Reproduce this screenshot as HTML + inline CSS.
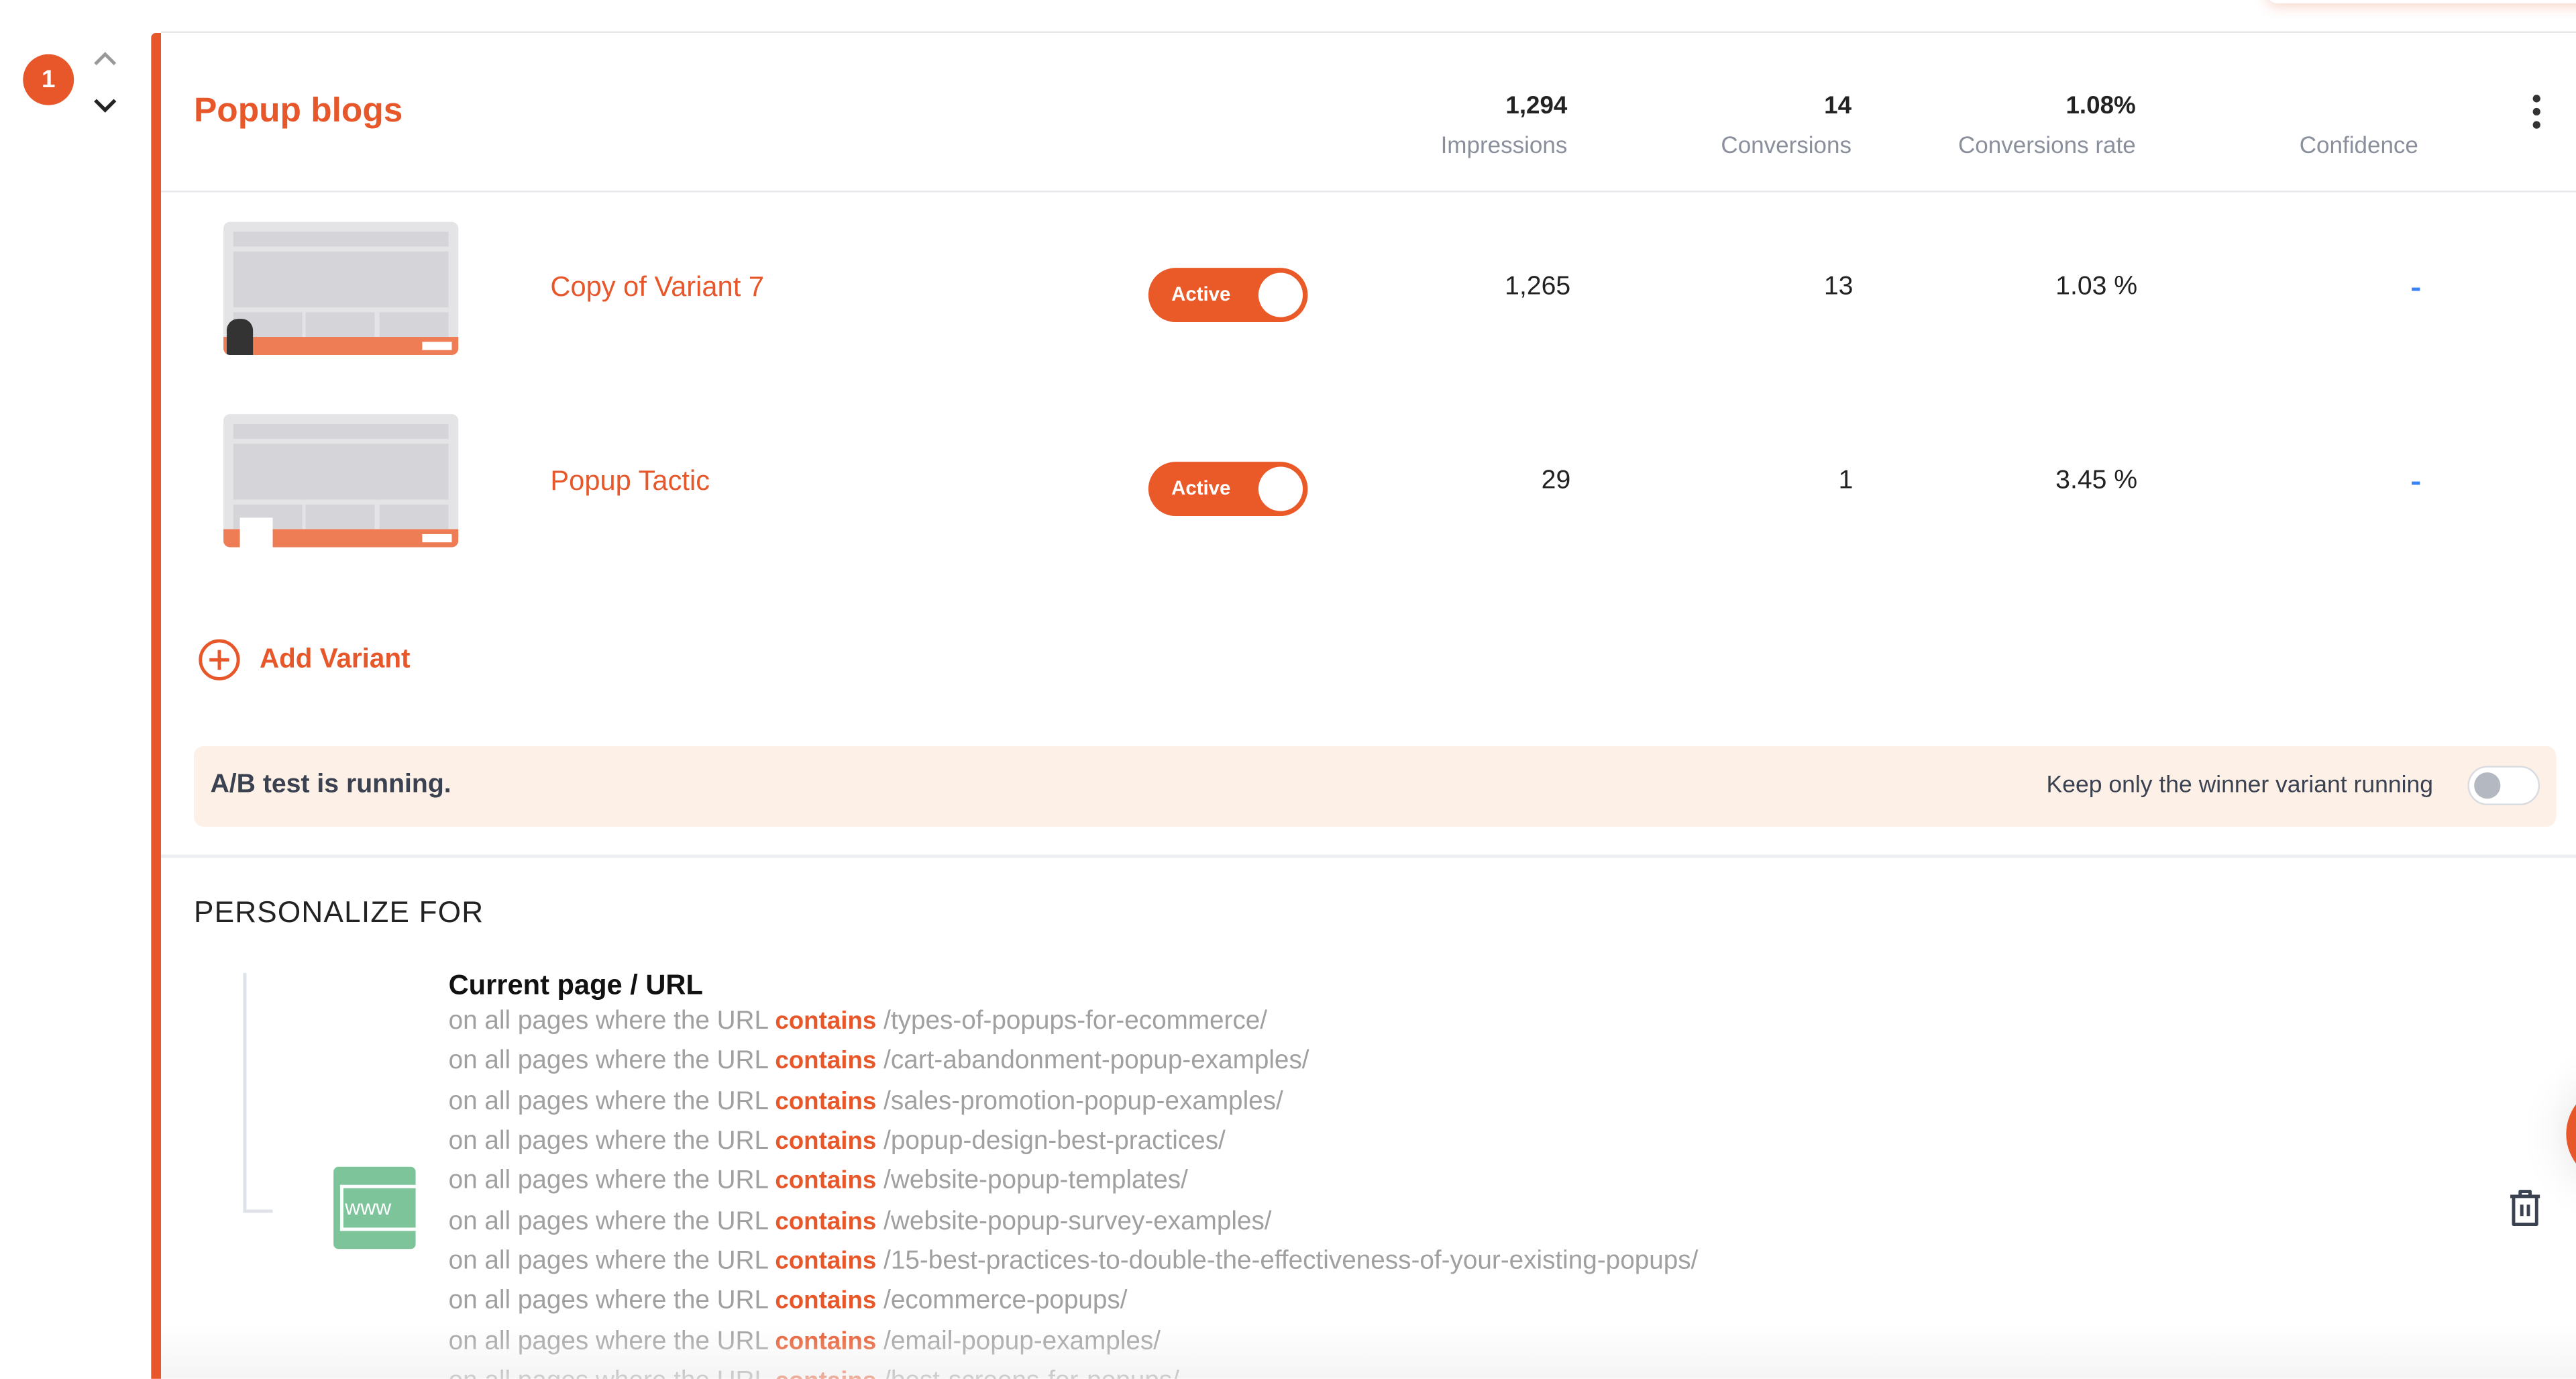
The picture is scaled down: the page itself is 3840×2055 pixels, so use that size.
<!DOCTYPE html>
<html><head><meta charset="utf-8"><style>
*{margin:0;padding:0;box-sizing:border-box}
html,body{width:3840px;height:2055px;overflow:hidden;background:#fff}
#w{position:absolute;left:0;top:0;width:1568px;height:839px;transform:scale(2.449);transform-origin:0 0;font-family:"Liberation Sans",Arial,sans-serif;overflow:hidden}
.a{position:absolute;white-space:nowrap}
.or{color:#e8572a}
.num{font-size:15px;font-weight:bold;color:#222;text-align:right}
.lbl{font-size:14.3px;color:#8a8f9c;text-align:right}
.tog{position:absolute;width:97px;height:33px;border-radius:17px;background:#ea5a28;}
.tog span{position:absolute;left:14px;top:9px;color:#fff;font-size:12px;font-weight:bold}
.tog i{position:absolute;right:3px;top:3px;width:27px;height:27px;border-radius:50%;background:#fff}
.th{position:absolute;width:143px;height:81px;background:#e4e4e7;border-radius:4px;overflow:hidden}
.th b{position:absolute;background:#d5d5d9}
.th .s{position:absolute;left:0;bottom:0;width:100%;height:11px;background:#ee7d55}
.url{position:absolute;left:273px;font-size:15.8px;color:#a0a0a0;white-space:nowrap}
.url em{font-style:normal;font-weight:bold;color:#e8572a;font-size:15px}
</style></head><body><div id="w">
<div class="a" style="left:1380px;top:-10px;width:200px;height:12px;border-radius:6px;box-shadow:0 2px 8px rgba(232,87,42,.25)"></div>
<div class="a" style="left:14px;top:33px;width:31px;height:31px;border-radius:50%;background:#e8572a;color:#fff;font-size:15px;font-weight:bold;text-align:center;line-height:31px">1</div>
<svg class="a" style="left:56px;top:28px" width="16" height="44"><path d="M2 11 L8 5 L14 11" stroke="#999" stroke-width="2" fill="none"/><path d="M2 33 L8 39 L14 33" stroke="#222" stroke-width="2.2" fill="none"/></svg>
<div class="a" style="left:92px;top:20px;width:6px;height:820px;background:#e8572a;border-radius:3px 0 0 0"></div>
<div class="a" style="left:98px;top:19px;width:1470px;height:1px;background:#e6e8ec"></div>
<div class="a or" style="left:118px;top:56px;font-size:21px;font-weight:bold">Popup blogs</div>
<div class="a num" style="right:614px;top:56px">1,294</div><div class="a lbl" style="right:614px;top:81px">Impressions</div>
<div class="a num" style="right:441px;top:56px">14</div><div class="a lbl" style="right:441px;top:81px">Conversions</div>
<div class="a num" style="right:268px;top:56px">1.08%</div><div class="a lbl" style="right:268px;top:81px">Conversions rate</div>
<div class="a lbl" style="right:96px;top:81px">Confidence</div>
<svg class="a" style="left:1539px;top:56px" width="10" height="26"><circle cx="5" cy="4" r="2.3" fill="#333"/><circle cx="5" cy="12" r="2.3" fill="#333"/><circle cx="5" cy="20" r="2.3" fill="#333"/></svg>
<div class="a" style="left:98px;top:116px;width:1470px;height:1px;background:#e6e8ec"></div>

<div class="th" style="left:136px;top:135px"><b style="left:6px;top:6px;width:131px;height:9px"></b><b style="left:6px;top:18px;width:131px;height:34px"></b><b style="left:6px;top:55px;width:42px;height:18px"></b><b style="left:50px;top:55px;width:42px;height:18px"></b><b style="left:95px;top:55px;width:42px;height:18px"></b><div class="s"></div><div style="position:absolute;left:2px;bottom:0;width:16px;height:22px;background:#333;border-radius:7px 7px 0 0"></div><div style="position:absolute;right:4px;bottom:3px;width:18px;height:5px;background:#fff"></div></div>
<div class="a or" style="left:335px;top:165px;font-size:17px">Copy of Variant 7</div>
<div class="tog" style="left:699px;top:163px"><span>Active</span><i></i></div>
<div class="a num" style="right:612px;top:166px;font-size:16px;font-weight:normal">1,265</div>
<div class="a num" style="right:440px;top:166px;font-size:16px;font-weight:normal">13</div>
<div class="a num" style="right:267px;top:166px;font-size:16px;font-weight:normal">1.03 %</div>
<div class="a" style="left:1468px;top:175px;width:5px;height:2px;background:#3b82f6"></div>

<div class="th" style="left:136px;top:252px"><b style="left:6px;top:6px;width:131px;height:9px"></b><b style="left:6px;top:18px;width:131px;height:34px"></b><b style="left:6px;top:55px;width:42px;height:18px"></b><b style="left:50px;top:55px;width:42px;height:18px"></b><b style="left:95px;top:55px;width:42px;height:18px"></b><div class="s"></div><div style="position:absolute;left:10px;bottom:0;width:20px;height:18px;background:#fff"></div><div style="position:absolute;right:4px;bottom:3px;width:18px;height:5px;background:#fff"></div></div>
<div class="a or" style="left:335px;top:283px;font-size:17px">Popup Tactic</div>
<div class="tog" style="left:699px;top:281px"><span>Active</span><i></i></div>
<div class="a num" style="right:612px;top:284px;font-size:16px;font-weight:normal">29</div>
<div class="a num" style="right:440px;top:284px;font-size:16px;font-weight:normal">1</div>
<div class="a num" style="right:267px;top:284px;font-size:16px;font-weight:normal">3.45 %</div>
<div class="a" style="left:1468px;top:293px;width:5px;height:2px;background:#3b82f6"></div>

<svg class="a" style="left:120px;top:388px" width="27" height="27"><circle cx="13.5" cy="13.5" r="11.5" stroke="#e8572a" stroke-width="2" fill="none"/><path d="M13.5 7.5v12M7.5 13.5h12" stroke="#e8572a" stroke-width="2"/></svg>
<div class="a or" style="left:158px;top:392px;font-size:16.5px;font-weight:bold">Add Variant</div>

<div class="a" style="left:118px;top:454px;width:1438px;height:49px;background:#fdf0e6;border-radius:6px"></div>
<div class="a" style="left:128px;top:469px;font-size:16px;font-weight:bold;color:#3a4150">A/B test is running.</div>
<div class="a" style="right:87px;top:470px;font-size:14.5px;color:#3a4150">Keep only the winner variant running</div>
<div class="a" style="left:1502px;top:466px;width:44px;height:24px;border-radius:12px;background:#fff;border:1px solid #d8dbe0"></div>
<div class="a" style="left:1506px;top:470px;width:16px;height:16px;border-radius:50%;background:#b4b8c0"></div>
<div class="a" style="left:98px;top:520px;width:1470px;height:2px;background:#eceef1"></div>

<div class="a" style="left:118px;top:545px;font-size:18px;color:#222;letter-spacing:.5px">PERSONALIZE FOR</div>
<div class="a" style="left:148px;top:592px;width:2px;height:146px;background:#dfe2e8"></div>
<div class="a" style="left:148px;top:736px;width:18px;height:2px;background:#dfe2e8"></div>
<div class="a" style="left:203px;top:710px;width:50px;height:50px;background:#7ec49a;border-radius:3px"></div>
<div class="a" style="left:207px;top:721px;width:46px;height:28px;border:2.5px solid #fff;border-right:none;color:#fff;font-size:13px;line-height:23px;padding-left:1px">www</div>
<div class="a" style="left:273px;top:590px;font-size:17px;font-weight:bold;color:#111">Current page / URL</div>
<div class="url" style="top:613px">on all pages where the URL <em>contains</em> /types-of-popups-for-ecommerce/</div>
<div class="url" style="top:637px">on all pages where the URL <em>contains</em> /cart-abandonment-popup-examples/</div>
<div class="url" style="top:662px">on all pages where the URL <em>contains</em> /sales-promotion-popup-examples/</div>
<div class="url" style="top:686px">on all pages where the URL <em>contains</em> /popup-design-best-practices/</div>
<div class="url" style="top:710px">on all pages where the URL <em>contains</em> /website-popup-templates/</div>
<div class="url" style="top:735px">on all pages where the URL <em>contains</em> /website-popup-survey-examples/</div>
<div class="url" style="top:759px">on all pages where the URL <em>contains</em> /15-best-practices-to-double-the-effectiveness-of-your-existing-popups/</div>
<div class="url" style="top:783px">on all pages where the URL <em>contains</em> /ecommerce-popups/</div>
<div class="url" style="top:808px">on all pages where the URL <em>contains</em> /email-popup-examples/</div>
<div class="url" style="top:832px">on all pages where the URL <em>contains</em> /best-screens-for-popups/</div>
<svg class="a" style="left:1525px;top:722px" width="24" height="26"><path d="M3 6h18M9 6V3h6v3M5 6v17h14V6M10 11v7M14 11v7" stroke="#3a4150" stroke-width="2" fill="none" stroke-linejoin="round"/></svg>
<div class="a" style="left:1562px;top:660px;width:60px;height:60px;border-radius:50%;background:#e8572a;box-shadow:0 0 30px rgba(0,0,0,.12)"></div>
<div class="a" style="left:98px;top:805px;width:1470px;height:34px;background:linear-gradient(rgba(240,240,240,0),rgba(238,238,238,.6))"></div>
</div></body></html>
